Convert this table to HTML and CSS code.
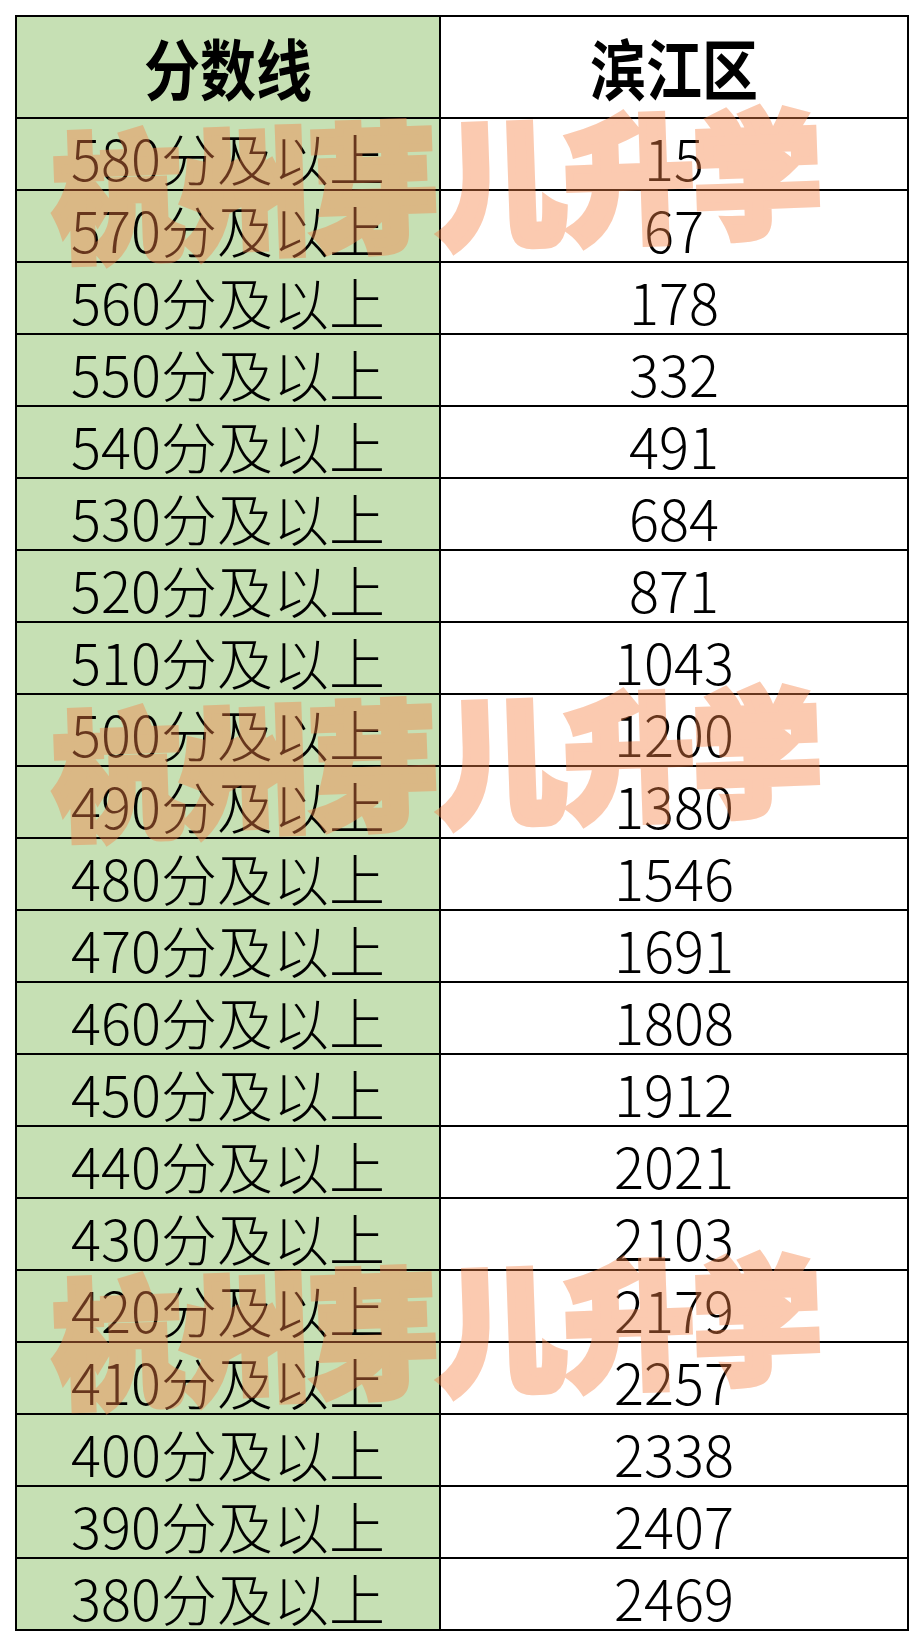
FILE: index.html
```html
<!DOCTYPE html>
<html lang="zh-CN">
<head>
<meta charset="utf-8">
<title>分数线 滨江区</title>
<link rel="stylesheet" href="styles.css">
</head>
<body>
<div class="sheet">
  <div class="grid">
    <div class="cell head key"><span class="htxt">分数线</span></div>
    <div class="cell head val"><span class="htxt">滨江区</span></div>
    <div class="cell key">580分及以上</div><div class="cell val">15</div>
    <div class="cell key">570分及以上</div><div class="cell val">67</div>
    <div class="cell key">560分及以上</div><div class="cell val">178</div>
    <div class="cell key">550分及以上</div><div class="cell val">332</div>
    <div class="cell key">540分及以上</div><div class="cell val">491</div>
    <div class="cell key">530分及以上</div><div class="cell val">684</div>
    <div class="cell key">520分及以上</div><div class="cell val">871</div>
    <div class="cell key">510分及以上</div><div class="cell val">1043</div>
    <div class="cell key">500分及以上</div><div class="cell val">1200</div>
    <div class="cell key">490分及以上</div><div class="cell val">1380</div>
    <div class="cell key">480分及以上</div><div class="cell val">1546</div>
    <div class="cell key">470分及以上</div><div class="cell val">1691</div>
    <div class="cell key">460分及以上</div><div class="cell val">1808</div>
    <div class="cell key">450分及以上</div><div class="cell val">1912</div>
    <div class="cell key">440分及以上</div><div class="cell val">2021</div>
    <div class="cell key">430分及以上</div><div class="cell val">2103</div>
    <div class="cell key">420分及以上</div><div class="cell val">2179</div>
    <div class="cell key">410分及以上</div><div class="cell val">2257</div>
    <div class="cell key">400分及以上</div><div class="cell val">2338</div>
    <div class="cell key">390分及以上</div><div class="cell val">2407</div>
    <div class="cell key">380分及以上</div><div class="cell val">2469</div>
  </div>
  <div class="wm wm1">杭州芽儿升学</div>
  <div class="wm wm2">杭州芽儿升学</div>
  <div class="wm wm3">杭州芽儿升学</div>
</div>
</body>
</html>
```

FILE: styles.css
```css
html, body {
  margin: 0;
  padding: 0;
  background: #ffffff;
}

.sheet {
  position: relative;
  margin: 15px 0 0 15px;
  width: 894px;
}

.grid {
  display: grid;
  grid-template-columns: 422px 466px;
  grid-template-rows: 100px repeat(21, 70px);
  gap: 2px;
  padding: 2px;
  background: #000000;
}

.cell {
  display: flex;
  align-items: center;
  justify-content: center;
  padding-top: 6px;
  box-sizing: border-box;
  font-family: "Noto Sans CJK SC", "Noto Sans", sans-serif;
  font-weight: 300;
  font-size: 56px;
  line-height: 1;
  color: #000000;
  white-space: nowrap;
}

.key {
  background: #c6e0b4;
}

.val {
  background: #ffffff;
}

.head {
  padding-top: 0;
  font-weight: 700;
}

.htxt {
  display: inline-block;
  transform: scaleY(1.18);
}

.wm {
  position: absolute;
  left: 38px;
  font-family: "Noto Sans CJK SC", sans-serif;
  font-weight: 900;
  font-size: 128px;
  line-height: 1;
  color: rgb(246, 130, 70);
  -webkit-text-stroke: 8px rgb(246, 130, 70);
  opacity: 0.42;
  white-space: nowrap;
  pointer-events: none;
  transform-origin: center center;
  transform: rotate(-2deg) scaleY(1.06);
}

.wm1 {
  top: 100px;
}

.wm2 {
  top: 678px;
}

.wm3 {
  top: 1246px;
}
```
